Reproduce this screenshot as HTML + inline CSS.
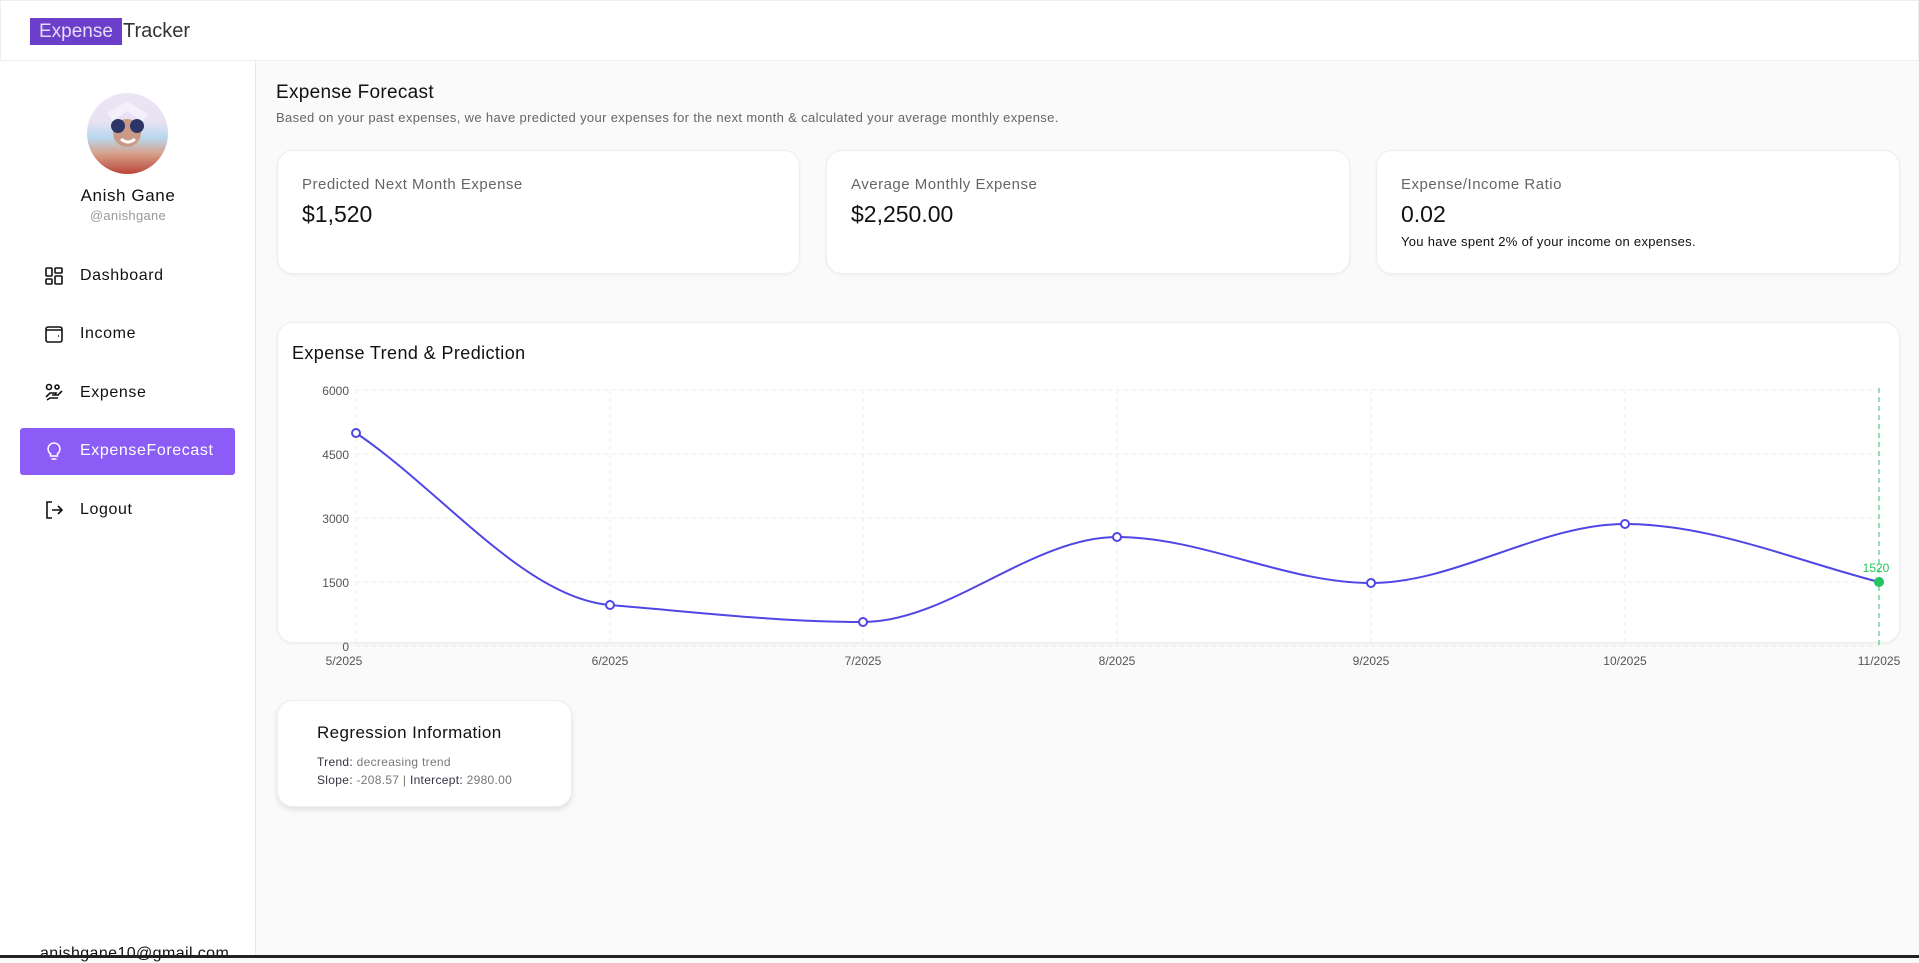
<!DOCTYPE html>
<html><head><meta charset="utf-8"><style>
*{box-sizing:border-box;margin:0;padding:0}
body{width:1919px;height:958px;overflow:hidden;background:#fafafa;font-family:"Liberation Sans",sans-serif;position:relative;color:#111}
.hdr{position:absolute;left:0;top:0;width:1919px;height:61px;background:#fff;border:1px solid #eee}
.logo{position:absolute;left:29px;top:17px;height:27px;background:#6b3fc9;color:#e5dcf7;font-size:19px;line-height:27px;padding:0 9px}
.logo2{position:absolute;left:122px;top:17px;font-size:20px;line-height:27px;color:#333}
.side{position:absolute;left:0;top:61px;width:256px;height:897px;background:#fff;border-right:1px solid #e8e8e8}
.av{position:absolute;left:87px;top:93px;width:81px;height:81px;border-radius:50%;overflow:hidden;background:linear-gradient(180deg,#ece4f4 0,#e9e2f3 35%,#b9d8ee 55%,#d7a08a 75%,#b9463a 100%)}
.name{position:absolute;left:0;width:256px;text-align:center;top:186px;font-size:17px;letter-spacing:.6px}
.handle{position:absolute;left:0;width:256px;text-align:center;top:208px;font-size:13px;color:#999;letter-spacing:.3px}
.nav{position:absolute;left:44px;font-size:16px;display:flex;align-items:center;gap:16px;letter-spacing:.6px}
.nav svg{width:20px;height:20px}
.act{position:absolute;left:20px;top:428px;width:215px;height:47px;background:#8b5cf6;border-radius:3px}
.main h1{position:absolute;left:276px;top:82px;font-size:19px;font-weight:normal;letter-spacing:.3px}
.sub{position:absolute;left:276px;top:110px;font-size:13px;color:#666;letter-spacing:.35px}
.card{position:absolute;background:#fff;border:1px solid #eee;border-radius:16px;box-shadow:0 1px 3px rgba(0,0,0,.05)}
.lbl{position:absolute;left:24px;top:25px;font-size:15px;color:#666;letter-spacing:.5px}
.val{position:absolute;left:24px;top:50px;font-size:23px}
</style></head><body>
<div class="hdr"><div class="logo">Expense</div><div class="logo2">Tracker</div></div>
<div class="side">
</div>
<div class="av"><svg width="81" height="81"><circle cx="40" cy="40" r="14" fill="#c99a86"/><circle cx="31" cy="33" r="7" fill="#2b3566"/><circle cx="50" cy="33" r="7" fill="#2b3566"/><path d="M20 20 L40 8 L62 22 L55 28 L40 18 L26 28Z" fill="#f4effa"/><path d="M34 46 Q41 52 48 46" stroke="#fff" stroke-width="3" fill="none"/></svg></div>
<div class="name">Anish Gane</div>
<div class="handle">@anishgane</div>
<div class="nav" style="top:266px"><svg viewBox="0 0 20 20" fill="none" stroke="#111" stroke-width="1.6"><rect x="2" y="2" width="6" height="8" rx="1"/><rect x="2" y="13" width="6" height="5" rx="1"/><rect x="11" y="2" width="7" height="5" rx="1"/><rect x="11" y="10" width="7" height="8" rx="1"/></svg>Dashboard</div>
<div class="nav" style="top:324px"><svg viewBox="0 0 20 20" fill="none" stroke="#111" stroke-width="1.6"><rect x="2" y="3" width="16" height="15" rx="2"/><path d="M2 6h16M14 12h1"/></svg>Income</div>
<div class="nav" style="top:383px"><svg viewBox="0 0 20 20" fill="none" stroke="#111" stroke-width="1.6"><circle cx="5" cy="4" r="2.5"/><path d="M2 14l4-4h6l-1 2H8M8 12h6l4-4M3 17l3-2h8"/><circle cx="13" cy="4" r="2"/></svg>Expense</div>
<div class="act"></div>
<div class="nav" style="top:441px;color:#fff"><svg viewBox="0 0 20 20" fill="none" stroke="#fff" stroke-width="1.6"><path d="M10 2a6 6 0 0 0-3.5 10.8V15h7v-2.2A6 6 0 0 0 10 2zM7.5 18h5"/></svg>ExpenseForecast</div>
<div class="nav" style="top:500px"><svg viewBox="0 0 20 20" fill="none" stroke="#111" stroke-width="1.6"><path d="M8 2H3v16h5M8 10h10M14 6l4 4-4 4"/></svg>Logout</div>
<div style="position:absolute;left:40px;top:945px;font-size:16px;letter-spacing:.4px">anishgane10@gmail.com</div>
<div style="position:absolute;left:0;top:955px;width:1919px;height:3px;background:#222"></div>

<div class="main">
<h1>Expense Forecast</h1>
<div class="sub">Based on your past expenses, we have predicted your expenses for the next month &amp; calculated your average monthly expense.</div>
<div class="card" style="left:277px;top:150px;width:523px;height:124px"><div class="lbl">Predicted Next Month Expense</div><div class="val">$1,520</div></div>
<div class="card" style="left:826px;top:150px;width:524px;height:124px"><div class="lbl">Average Monthly Expense</div><div class="val">$2,250.00</div></div>
<div class="card" style="left:1376px;top:150px;width:524px;height:124px"><div class="lbl">Expense/Income Ratio</div><div class="val">0.02</div><div style="position:absolute;left:24px;top:83px;font-size:13px;letter-spacing:.3px">You have spent 2% of your income on expenses.</div></div>
<div class="card" style="left:277px;top:322px;width:1623px;height:321px"><div style="position:absolute;left:14px;top:20px;font-size:18px;letter-spacing:.4px">Expense Trend &amp; Prediction</div></div>
<svg style="position:absolute;left:0;top:0" width="1919" height="958" font-family="Liberation Sans" font-size="12" fill="#555">
<g stroke="#ececec" stroke-dasharray="4 4">
<line x1="356" y1="390" x2="1879" y2="390"/><line x1="356" y1="454" x2="1879" y2="454"/><line x1="356" y1="518" x2="1879" y2="518"/><line x1="356" y1="582" x2="1879" y2="582"/><line x1="356" y1="646" x2="1879" y2="646"/>
<line x1="356" y1="390" x2="356" y2="646"/><line x1="610" y1="390" x2="610" y2="646"/><line x1="863" y1="390" x2="863" y2="646"/><line x1="1117" y1="390" x2="1117" y2="646"/><line x1="1371" y1="390" x2="1371" y2="646"/><line x1="1625" y1="390" x2="1625" y2="646"/>
</g>
<line x1="1879" y1="388" x2="1879" y2="646" stroke="#22c55e" stroke-dasharray="5 4"/>
<g text-anchor="end"><text x="349" y="395">6000</text><text x="349" y="459">4500</text><text x="349" y="523">3000</text><text x="349" y="587">1500</text><text x="349" y="651">0</text></g>
<g text-anchor="middle"><text x="344" y="665">5/2025</text><text x="610" y="665">6/2025</text><text x="863" y="665">7/2025</text><text x="1117" y="665">8/2025</text><text x="1371" y="665">9/2025</text><text x="1625" y="665">10/2025</text><text x="1879" y="665">11/2025</text></g>
<path d="M356,433 C441,490 525,598 610,605 C695,612 778,622 863,622 C948,622 1032,537 1117,537 C1202,537 1286,583 1371,583 C1456,583 1540,524 1625,524 C1710,524 1794,560 1879,582" fill="none" stroke="#4f46e5" stroke-width="2"/>
<g fill="#fff" stroke="#4f46e5" stroke-width="2"><circle cx="356" cy="433" r="4"/><circle cx="610" cy="605" r="4"/><circle cx="863" cy="622" r="4"/><circle cx="1117" cy="537" r="4"/><circle cx="1371" cy="583" r="4"/><circle cx="1625" cy="524" r="4"/></g>
<circle cx="1879" cy="582" r="5" fill="#22c55e"/>
<text x="1876" y="572" fill="#22c55e" text-anchor="middle">1520</text>
</svg>
<div class="card" style="left:277px;top:700px;width:295px;height:107px;box-shadow:0 3px 6px rgba(0,0,0,.1)">
<div style="position:absolute;left:39px;top:22px;font-size:17px;letter-spacing:.4px">Regression Information</div>
<div style="position:absolute;left:39px;top:52px;font-size:12px;color:#777;line-height:18px;letter-spacing:.3px"><span style="color:#334">Trend:</span> decreasing trend<br><span style="color:#334">Slope:</span> -208.57 | <span style="color:#334">Intercept:</span> 2980.00</div>
</div>
</div>
</body></html>
